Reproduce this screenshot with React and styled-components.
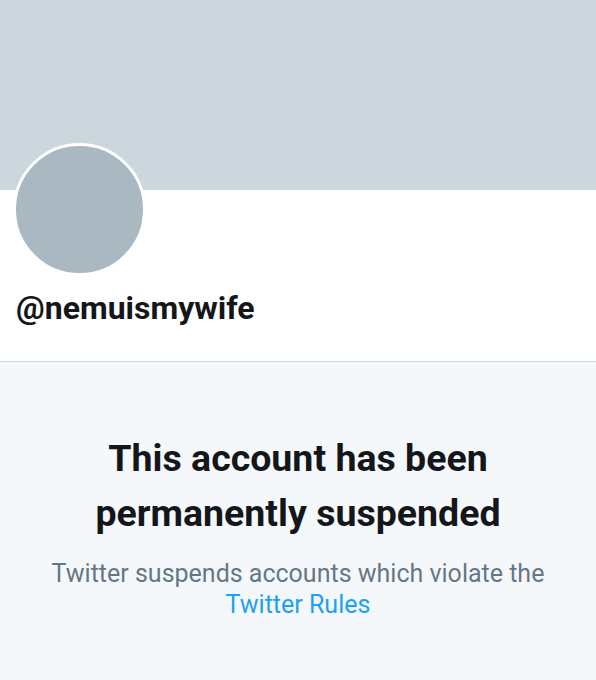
import styled, { createGlobalStyle } from "styled-components";

const GlobalStyle = createGlobalStyle`
  html, body {
    margin: 0;
    padding: 0;
    background: #f5f8fa;
  }
  body {
    font-family: Roboto, "Liberation Sans", sans-serif;
  }
`;

export default function App() {
  return (
    <>
      <GlobalStyle />
      <Page>
        <Banner />
        <Profile>
          <Avatar />
          <Handle>@nemuismywife</Handle>
        </Profile>
        <Notice>
          <Heading>
            This account has been
            <br />
            permanently suspended
          </Heading>
          <Body>
            Twitter suspends accounts which violate the
            <br />
            <RulesLink href="#">Twitter Rules</RulesLink>
          </Body>
        </Notice>
      </Page>
    </>
  );
}

const Page = styled.div`
  width: 596px;
  height: 680px;
  overflow: hidden;
  display: flex;
  flex-direction: column;
  background: #f5f8fa;
`;

const Banner = styled.div`
  height: 190px;
  background: #ccd6dd;
  flex-shrink: 0;
`;

const Profile = styled.div`
  background: #ffffff;
  padding: 0 16px;
  height: 171px;
  border-bottom: 1px solid #ccd6dd;
  display: flex;
  flex-direction: column;
  flex-shrink: 0;
`;

const Avatar = styled.div`
  width: 127px;
  height: 127px;
  border-radius: 50%;
  background: #aab8c2;
  border: 3px solid #ffffff;
  margin: -47px 0 0 -3px;
`;

const Handle = styled.div`
  margin-top: 13px;
  font-size: 32px;
  font-weight: 700;
  color: #14171a;
`;

const Notice = styled.div`
  padding-top: 69px;
  display: flex;
  flex-direction: column;
  align-items: center;
  text-align: center;
`;

const Heading = styled.h1`
  margin: 0;
  font-size: 37.5px;
  line-height: 55px;
  font-weight: 700;
  color: #14171a;
`;

const Body = styled.p`
  margin: 17px 0 0;
  font-size: 25px;
  line-height: 31px;
  color: #657786;
`;

const RulesLink = styled.a`
  color: #1da1f2;
  text-decoration: none;
`;
